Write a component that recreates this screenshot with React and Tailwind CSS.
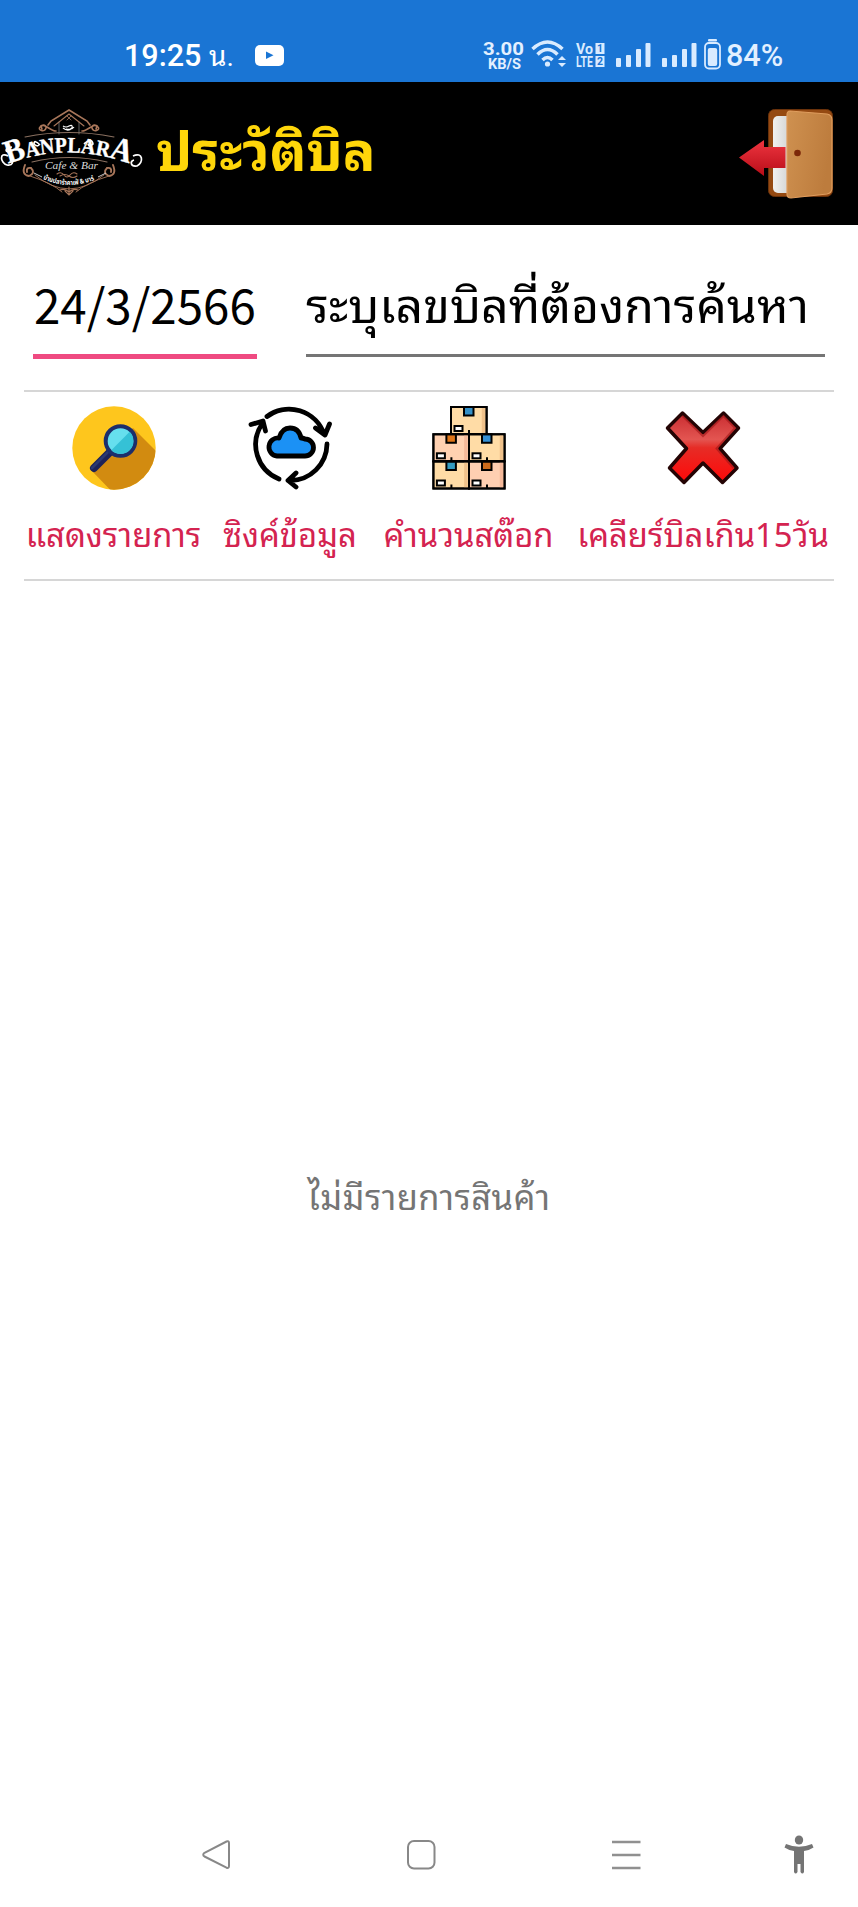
const THAI = "font-['Noto_Sans_Thai_Looped','Noto_Sans_Thai','Noto_Sans_CJK_JP',sans-serif]";

function Logo() {
  return (
    <svg width="146" height="110" viewBox="0 0 146 110" className="block shrink-0">
      <g fill="none" stroke="#a8765a" strokeWidth="1.1" strokeLinecap="round">
        <path d="M48 30 L51 26 L69 15 L87 26 L90 30" strokeWidth="1.6" />
        <path d="M54 31 L69 19 L84 31" />
        <path d="M59 27 V39 M79 27 V39" stroke="#8d8d8d" strokeWidth="0.7" />
        <path d="M42 34 c-3 -5 5 -5 4 -1 c-1 5 -9 2 -6 -1 c3 -6 11 5 16 4 M96 34 c3 -5 -5 -5 -4 -1 c1 5 9 2 6 -1 c-3 -6 -11 5 -16 4" strokeWidth="1.6" />
        <path d="M25 42 Q69 33 114 42" stroke="#8a7060" />
        <path d="M32 67 Q69 58 107 67" stroke="#8a7060" />
        <path d="M25 70 q-4 10 4 11 q7 -3 2 -8 q-5 -1 -4 4 M113 70 q4 10 -4 11 q-7 -3 -2 -8 q5 -1 4 4" strokeWidth="1.9" />
        <path d="M30 81 Q52 88 62 97 M109 81 Q86 88 76 97 M35 80 Q69 108 104 80" strokeWidth="0.9" />
        <path d="M57 79 q4 -3 7 1 t6 0 t7 -1 M60 81 q5 -3 9 0 t8 0" />
        <path d="M60 95 q5 -2 9 2 q4 -4 9 -2 M69 92 V100 M65 96 L69 100 L73 96" />
        <path d="M67 21 l4 4 M71 21 l-4 4" strokeWidth="0.8" />
      </g>
      <path d="M63 33 q5 4 9 0 q1 -4 -3 -2 q-3 2 -6 0 M66 34 q6 1 8 -2" fill="none" stroke="#fff" strokeWidth="1.2" />
      <defs>
        <path id="name" d="M8 69 Q69 45 136 71" />
        <path id="thai" d="M43 84 Q69 96 97 84" />
      </defs>
      <text className="font-['Liberation_Serif',serif] font-bold" fill="#fff" stroke="#fff" strokeWidth="0.4" fontSize="22">
        <textPath href="#name" textLength="124" lengthAdjust="spacingAndGlyphs"><tspan fontSize="33">B</tspan>ANPLAR<tspan fontSize="33">A</tspan></textPath>
      </text>
      <path d="M12 52 C3 53 6 59 10 56 M8 61 C-1 56 0 68 7 70 C13 71 14 66 10 65 M133 61 C143 56 144 68 137 71 C130 72 130 66 134 65 M40 50 q-6 -6 -6 -1 q3 3 5 1 M84 49 q8 -7 9 0 q-4 4 -5 0" fill="none" stroke="#fff" strokeWidth="1.7" />
      <text x="45" y="73.5" textLength="53" lengthAdjust="spacingAndGlyphs" fontSize="11" fill="#ddd" className="font-['Liberation_Serif',serif] italic">Cafe &amp; Bar</text>
      <text fontSize="7" fill="#fff" className="font-['Noto_Sans_Thai',sans-serif] font-bold"><textPath href="#thai" textLength="53" lengthAdjust="spacingAndGlyphs">บ้านปลาร้าคาเฟ่ &amp; บาร์</textPath></text>
      <path d="M34 78 L42 82 M106 78 L98 82" stroke="#ddd" strokeWidth="0.9" />
    </svg>
  );
}

function Door() {
  return (
    <svg width="98" height="94" viewBox="0 0 98 94" className="block">
      <defs>
        <linearGradient id="wood" x2="1" y2="0.3"><stop stopColor="#cf9150" /><stop offset="1" stopColor="#bd7c3d" /></linearGradient>
        <linearGradient id="arrow" x2="0" y2="1"><stop stopColor="#ee3540" /><stop offset="1" stopColor="#b80d18" /></linearGradient>
        <linearGradient id="paper"><stop stopColor="#f1f1ef" /><stop offset="1" stopColor="#bdbfc1" /></linearGradient>
      </defs>
      <rect x="29.500" y="1.500" width="64" height="87" rx="6" fill="#954a12" stroke="#6a320b" />
      <rect x="34" y="8" width="28" height="77" rx="5" fill="url(#paper)" />
      <path d="M51 3 L88 6 Q93 7 93 12 V80 Q93 85 88 86 L52 90 Q48 90 48 86 V7 Q48 3 51 3Z" fill="url(#wood)" stroke="#df9d5e" strokeWidth="1.2" />
      <circle cx="58.500" cy="45" r="3.300" fill="#7c2809" />
      <path d="M46.500 39 H25 V32 L0 49.500 L25 68 V60 H46.500Z" fill="url(#arrow)" />
    </svg>
  );
}

function Magnifier() {
  return (
    <svg width="84" height="84" viewBox="0 0 84 84" className="block">
      <defs><clipPath id="disc"><circle cx="42" cy="42" r="41.700" /></clipPath></defs>
      <g clipPath="url(#disc)">
        <rect width="84" height="84" fill="#fec61d" />
        <path d="M61 22 L95 56 V95 H49 L19 64 L40 43Z" fill="#d28b10" />
      </g>
      <path d="M41 43 L22 62" stroke="#1c2258" strokeWidth="8" strokeLinecap="round" />
      <path d="M39 43 L20 62" stroke="#2b3970" strokeWidth="2.500" strokeLinecap="round" />
      <circle cx="48.500" cy="35" r="14.800" fill="#66dfee" stroke="#1c2e6b" strokeWidth="4" />
      <path d="M57.700 25.800 A13 13 0 0 1 39.300 44.200Z" fill="#35c1d6" />
    </svg>
  );
}

function Sync() {
  return (
    <svg width="84" height="84" viewBox="0 0 84 84" className="block" fill="none" stroke="#000" strokeWidth="4.800" strokeLinecap="round" strokeLinejoin="round">
      <path d="M19 10.500 A37 37 0 0 1 76 28 M67.500 22 L77 29 L81.500 18" />
      <path d="M79 38 A37 37 0 0 1 42 74.500 M48 67 L40 74.500 L48 81" />
      <path d="M31 73 A37 37 0 0 1 14 18 M3 18.500 L15 15 L17.500 25" />
      <path d="M29 50 H57 A8.500 8.500 0 0 0 57 33 Q55 32 53 32 Q51 22 42 22 Q34 22 31 32 A9 9 0 0 0 29 50Z" fill="#1b91f5" />
    </svg>
  );
}

function Box({ x, y, fill, shade, tape }) {
  return (
    <g transform={`translate(${x} ${y})`} stroke="#000" strokeWidth="2">
      <rect width="35.600" height="27" fill={fill} />
      <path d="M32.500 1 V26" stroke={shade} strokeWidth="3.500" />
      <path d="M13 0 H22.500 V8.500 H13Z" fill={tape} />
      <rect x="3.500" y="19" width="8" height="5" fill="#fff" />
      <path d="M18 23 V27 M0 0 H35.600 V27 H0Z" fill="none" />
    </g>
  );
}

function Boxes() {
  return (
    <svg width="84" height="84" viewBox="0 0 84 84" className="block">
      <Box x={24} y={1} fill="#ffdca6" shade="#f0c28b" tape="#3590c7" />
      <Box x={6.4} y={28.3} fill="#ffd1b1" shade="#f5b99a" tape="#df7518" />
      <Box x={42} y={28.3} fill="#ffdca6" shade="#f0c28b" tape="#3590d5" />
      <Box x={6.4} y={55.500} fill="#ffdca6" shade="#f0c28b" tape="#359cc0" />
      <Box x={42} y={55.500} fill="#ffcfb1" shade="#f5b99a" tape="#cc6a1b" />
    </svg>
  );
}

function Cross() {
  return (
    <svg width="84" height="84" viewBox="0 0 84 84" className="block">
      <defs><linearGradient id="red" x2="0" y2="1"><stop stopColor="#c92c30" /><stop offset="0.38" stopColor="#e35551" /><stop offset="0.5" stopColor="#e62c26" /><stop offset="1" stopColor="#ff0808" /></linearGradient></defs>
      <path d="M21.500 7 L42 26.500 L62.500 7 L77.500 22 L59 42.500 L76 62 L61.500 76.500 L42 57 L23 76.500 L8.500 62 L25.500 42.500 L6.500 22Z" fill="url(#red)" stroke="#240404" strokeWidth="3.500" strokeLinejoin="round" />
      <path d="M21.500 10 L42 30 L62.500 10 L74 22 L55.500 42.500 L72.500 62" fill="none" stroke="#9e1517" strokeWidth="2" opacity="0.6" />
    </svg>
  );
}

function Bars() {
  return (
    <svg width="36" height="26" viewBox="0 0 36 26" fill="#d9ebff" className="block">
      <rect y="15" width="5" height="9" rx="1" /><rect x="10" y="12" width="5" height="12" rx="1" />
      <rect x="20" y="6" width="5" height="18" rx="1" /><rect x="29.500" width="5" height="24" rx="1" />
    </svg>
  );
}

function VoLte() {
  return (
    <svg width="30" height="38" viewBox="0 0 30 38" className="ml-[6px] block font-['Roboto',sans-serif] font-bold" fill="#d9ebff">
      <text x="1" y="18" fontSize="14.500" textLength="17" lengthAdjust="spacingAndGlyphs">Vo</text>
      <text x="1" y="31" fontSize="14.500" textLength="17" lengthAdjust="spacingAndGlyphs">LTE</text>
      <rect x="20.500" y="7" width="9" height="11" /><rect x="20.500" y="20" width="9" height="11" />
      <g fill="#1a75d4" fontSize="10.500" textAnchor="middle"><text x="25" y="16.300">1</text><text x="25" y="29.300">2</text></g>
    </svg>
  );
}

function StatusBar() {
  return (
    <div className="flex h-[82px] items-start bg-[#1a75d4] pt-[36px] pl-[124px] text-[#e3f0ff] font-['Roboto','Noto_Sans_Thai_Looped','Noto_Sans_Thai',sans-serif]">
      <div className="h-[38px] w-[131px] whitespace-nowrap text-[30.5px] font-medium leading-[39px] text-white">19:25 <span className="text-[28px] font-normal">น.</span></div>
      <svg width="29" height="38" viewBox="0 0 29 38" className="block"><rect y="9" width="29" height="21" rx="5" fill="#fff" /><path d="M11 15.500 V23 L18.500 19.250Z" fill="#1a75d4" /></svg>
      <svg width="43" height="38" viewBox="0 0 43 38" className="ml-[198px] block font-['Roboto',sans-serif] font-bold" fill="#e3f0ff">
        <text x="1" y="19" fontSize="19" textLength="41" lengthAdjust="spacingAndGlyphs">3.00</text>
        <text x="6" y="33" fontSize="15" textLength="33" lengthAdjust="spacingAndGlyphs">KB/S</text>
      </svg>
      <svg width="38" height="38" viewBox="0 0 38 38" className="ml-[6px] block" fill="none" stroke="#d9ebff" strokeWidth="3.500">
        <path d="M1.500 13 Q16.500 -1 31.500 13 M6.500 18.500 Q16.500 8.500 26.500 18.500 M11.500 24 Q16.500 19 21.500 24" />
        <circle cx="16.500" cy="28" r="2.600" fill="#d9ebff" stroke="none" />
        <path d="M31 20 L35 24 H27Z M31 31 L35 27 H27Z" fill="#d9ebff" stroke="none" />
      </svg>
      <VoLte />
      <div className="ml-[11px] mt-[7px]"><Bars /></div>
      <div className="ml-[10px] mt-[7px]"><Bars /></div>
      <svg width="17" height="38" viewBox="0 0 17 38" className="ml-[6px] block"><rect x="4" y="3" width="9" height="2.500" rx="1" fill="#d9ebff" /><rect x="1" y="7" width="15" height="25.500" rx="4" fill="none" stroke="#d9ebff" strokeWidth="1.800" /><rect x="3.800" y="12" width="9.400" height="18" rx="2" fill="#d9ebff" /></svg>
      <div className="ml-[5px] flex h-[40px] items-center text-[30.5px] font-medium">84%</div>
    </div>
  );
}

function Action({ icon, label, className }) {
  return (
    <button className={`flex shrink-0 flex-col items-center ${className}`}>
      {icon}
      <span className={`mt-[14px] h-[56px] whitespace-nowrap text-[32.8px] leading-[56px] text-[#d42350] ${THAI}`}>{label}</span>
    </button>
  );
}

function NavBar() {
  return (
    <nav className="mt-[3px] flex h-[40px] items-center pl-[202px]">
      <svg width="29" height="30" viewBox="0 0 29 30" fill="none" stroke="#888" strokeWidth="2" className="block"><path d="M24.500 1.500 Q27 .7 27 3 V26 Q27 28.500 24.500 27.700 L2.500 16.500 Q0 14.700 2.500 12.800Z" strokeLinejoin="round" /></svg>
      <svg width="30" height="30" viewBox="0 0 30 30" fill="none" stroke="#888" strokeWidth="2" className="ml-[175px] block"><rect x="2" y="1" width="26.500" height="27.500" rx="6" /></svg>
      <svg width="29" height="30" viewBox="0 0 29 30" stroke="#909090" strokeWidth="2.500" className="ml-[176px] block"><path d="M0 2 H28.500 M0 15 H28.500 M0 28 H28.500" /></svg>
      <svg width="30" height="40" viewBox="0 0 30 40" fill="#747474" className="ml-[143px] block"><ellipse cx="15" cy="5" rx="4.200" ry="4.500" /><path d="M2 9 Q15 14.500 28 9 L29.500 12.500 Q25 15.500 20 16 V37 Q18.500 40 16.500 37 V29 H13.500 V37 Q11.500 40 10 37 V16 Q5 15.500 .5 12.500Z" /></svg>
    </nav>
  );
}

export default function App() {
  return (
    <div className="flex h-[1907px] w-[858px] flex-col overflow-hidden bg-white">
      <StatusBar />
      <header className="flex h-[143px] items-start bg-black">
        <div className="pt-[13px]"><Logo /></div>
        <h1 className={`ml-[10px] mt-[15px] h-[100px] w-[583px] whitespace-nowrap text-[54.3px] font-bold leading-[100px] text-[#ffd60a] ${THAI}`}>ประวัติบิล</h1>
        <div className="pt-[26px]"><Door /></div>
      </header>
      <main className="flex h-[1607px] flex-col px-[24px]">
        <section className="flex h-[167px] items-start gap-[49px] border-b-2 border-[#d6d6d6] pl-[9px] pr-[9px] pt-[44px]">
          <div className="h-[90px] w-[224px] whitespace-nowrap border-b-5 border-[#ef4a81] pl-px font-['Noto_Sans_CJK_JP',sans-serif] text-[47.5px] leading-[70px] text-black">24/3/2566</div>
          <div className={`h-[88px] w-[519px] whitespace-nowrap border-b-[3px] border-[#757575] text-[48.2px] leading-[65px] text-black ${THAI}`}>ระบุเลขบิลที่ต้องการค้นหา</div>
        </section>
        <section className="flex h-[189px] items-start border-b-2 border-[#d6d6d6] pt-[14px]">
          <Action className="w-[179px]" icon={<Magnifier />} label="แสดงรายการ" />
          <Action className="w-[174px]" icon={<Sync />} label="ซิงค์ข้อมูล" />
          <Action className="w-[183px]" icon={<Boxes />} label="คำนวนสต๊อก" />
          <Action className="w-[286px]" icon={<Cross />} label="เคลียร์บิลเกิน15วัน" />
        </section>
        <p className={`mt-[584px] h-[60px] text-center text-[34.5px] leading-[60px] tracking-[0.45px] text-[#757575] ${THAI}`}>ไม่มีรายการสินค้า</p>
      </main>
      <NavBar />
    </div>
  );
}
